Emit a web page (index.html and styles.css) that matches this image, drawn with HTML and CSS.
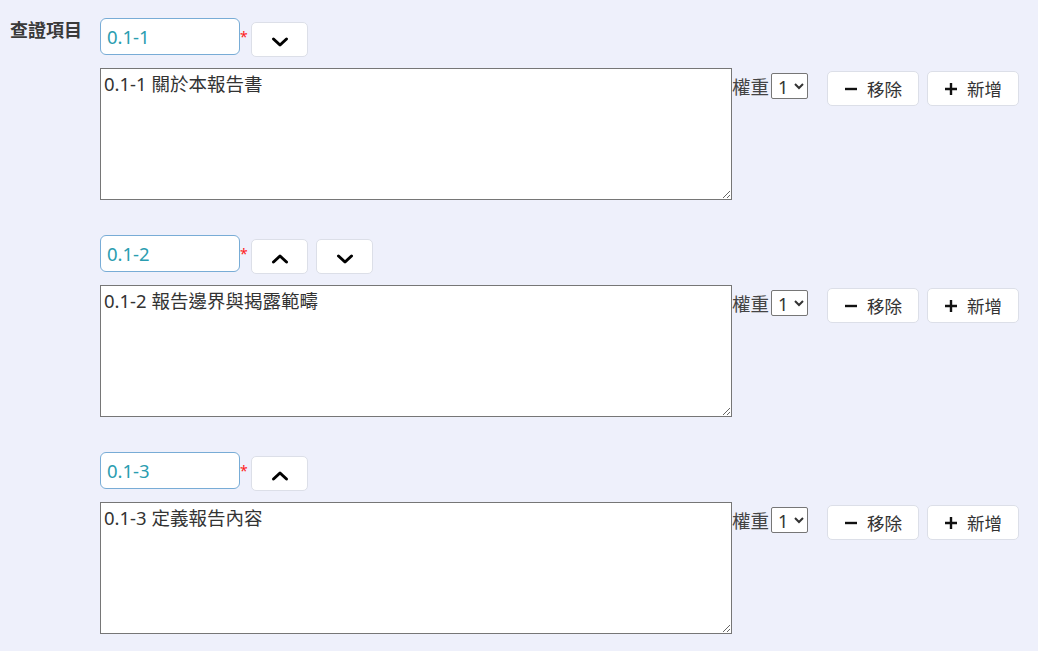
FILE: index.html
```html
<!DOCTYPE html>
<html lang="zh-Hant">
<head>
    <meta charset="UTF-8">
    <meta name="viewport" content="width=device-width, initial-scale=1.0">
    <title>查證項目</title>
    <link rel="stylesheet" href="styles.css">
</head>
<body>
    <div class="field">
        <label class="field-label">查證項目</label>
        <div class="items">

            <!-- item 1 -->
            <div class="item">
                <div class="item-head">
                    <input class="code-input" type="text" value="0.1-1">
                    <span class="required">*</span>
                    <button class="move-btn" title="下移">
                        <svg width="18" height="12" viewBox="0 0 18 12"><path d="M2.5 3 L9 9 L15.5 3" fill="none" stroke="#000" stroke-width="3" stroke-linecap="round" stroke-linejoin="round"/></svg>
                    </button>
                </div>
                <div class="item-body">
                    <textarea class="desc">0.1-1 關於本報告書</textarea>
                    <div class="weight">
                        <span>權重</span>
                        <select class="weight-select"><option>1</option><option>2</option><option>3</option></select>
                    </div>
                    <button class="act-btn">
                        <svg width="14" height="14" viewBox="0 0 14 14"><path d="M1 7 H13" stroke="#111" stroke-width="2.4"/></svg>
                        移除
                    </button>
                    <button class="act-btn add">
                        <svg width="14" height="14" viewBox="0 0 14 14"><path d="M1 7 H13 M7 1 V13" stroke="#111" stroke-width="2.4"/></svg>
                        新增
                    </button>
                </div>
            </div>

            <!-- item 2 -->
            <div class="item">
                <div class="item-head">
                    <input class="code-input" type="text" value="0.1-2">
                    <span class="required">*</span>
                    <button class="move-btn" title="上移">
                        <svg width="18" height="12" viewBox="0 0 18 12"><path d="M2.5 9 L9 3 L15.5 9" fill="none" stroke="#000" stroke-width="3" stroke-linecap="round" stroke-linejoin="round"/></svg>
                    </button>
                    <button class="move-btn" title="下移">
                        <svg width="18" height="12" viewBox="0 0 18 12"><path d="M2.5 3 L9 9 L15.5 3" fill="none" stroke="#000" stroke-width="3" stroke-linecap="round" stroke-linejoin="round"/></svg>
                    </button>
                </div>
                <div class="item-body">
                    <textarea class="desc">0.1-2 報告邊界與揭露範疇</textarea>
                    <div class="weight">
                        <span>權重</span>
                        <select class="weight-select"><option>1</option><option>2</option><option>3</option></select>
                    </div>
                    <button class="act-btn">
                        <svg width="14" height="14" viewBox="0 0 14 14"><path d="M1 7 H13" stroke="#111" stroke-width="2.4"/></svg>
                        移除
                    </button>
                    <button class="act-btn add">
                        <svg width="14" height="14" viewBox="0 0 14 14"><path d="M1 7 H13 M7 1 V13" stroke="#111" stroke-width="2.4"/></svg>
                        新增
                    </button>
                </div>
            </div>

            <!-- item 3 -->
            <div class="item">
                <div class="item-head">
                    <input class="code-input" type="text" value="0.1-3">
                    <span class="required">*</span>
                    <button class="move-btn" title="上移">
                        <svg width="18" height="12" viewBox="0 0 18 12"><path d="M2.5 9 L9 3 L15.5 9" fill="none" stroke="#000" stroke-width="3" stroke-linecap="round" stroke-linejoin="round"/></svg>
                    </button>
                </div>
                <div class="item-body">
                    <textarea class="desc">0.1-3 定義報告內容</textarea>
                    <div class="weight">
                        <span>權重</span>
                        <select class="weight-select"><option>1</option><option>2</option><option>3</option></select>
                    </div>
                    <button class="act-btn">
                        <svg width="14" height="14" viewBox="0 0 14 14"><path d="M1 7 H13" stroke="#111" stroke-width="2.4"/></svg>
                        移除
                    </button>
                    <button class="act-btn add">
                        <svg width="14" height="14" viewBox="0 0 14 14"><path d="M1 7 H13 M7 1 V13" stroke="#111" stroke-width="2.4"/></svg>
                        新增
                    </button>
                </div>
            </div>

        </div>
    </div>
</body>
</html>
```

FILE: styles.css
```css
/* Reset */
* {
    margin: 0;
    padding: 0;
    box-sizing: border-box;
}

body {
    background-color: #eef0fb;
    color: #333333;
    font-family: "Noto Sans", "Noto Sans CJK TC", sans-serif;
    font-size: 18px;
    padding: 18px 0 0 10px;
    overflow: hidden;
}

.field {
    display: flex;
    align-items: flex-start;
}

.field-label {
    width: 90px;
    flex: none;
    font-size: 18px;
    font-weight: bold;
    color: #3a3a3a;
    line-height: 24px;
}

.items {
    display: flex;
    flex-direction: column;
    gap: 35px;
}

/* top row: code + move buttons */
.item-head {
    display: flex;
    align-items: flex-start;
}

.code-input {
    width: 140px;
    height: 37px;
    padding: 0 6px;
    border: 1px solid #78acd6;
    border-radius: 6px;
    background: #ffffff;
    color: #2a9db0;
    font-family: inherit;
    font-size: 18.5px;
    outline: none;
}

.required {
    color: #ff1a1a;
    font-size: 14px;
    line-height: 14px;
    margin-top: 12px;
    width: 11px;
}

.move-btn {
    width: 57px;
    height: 35px;
    margin-top: 4px;
    margin-right: 8px;
    background: #ffffff;
    border: 1px solid #dcdfe8;
    border-radius: 5px;
    display: flex;
    align-items: center;
    justify-content: center;
    padding-top: 4px;
    cursor: pointer;
}

/* second row: textarea + weight + actions */
.item-body {
    display: flex;
    align-items: flex-start;
    margin-top: 11px;
}

.desc {
    display: block;
    width: 632px;
    height: 132px;
    padding: 2px 3px;
    border: 1px solid #767676;
    background: #ffffff;
    color: #333333;
    font-family: inherit;
    font-size: 18.5px;
    line-height: 26px;
    resize: vertical;
    outline: none;
}

.weight {
    display: flex;
    align-items: center;
    margin-top: 5px;
    height: 26px;
    color: #444444;
    font-size: 18.5px;
}

.weight-select {
    width: 37px;
    height: 26px;
    margin-left: 2px;
    padding: 0 0 0 2px;
    border: 1px solid #767676;
    border-radius: 2px;
    background: #ffffff;
    color: #333333;
    font-family: inherit;
    font-size: 18px;
}

.act-btn {
    width: 92px;
    height: 35px;
    margin-top: 3px;
    margin-left: 19px;
    display: flex;
    align-items: center;
    justify-content: center;
    gap: 9px;
    background: #ffffff;
    border: 1px solid #dcdfe8;
    border-radius: 5px;
    color: #333333;
    font-family: inherit;
    font-size: 17.5px;
    cursor: pointer;
}

.act-btn.add {
    margin-left: 8px;
}
```
